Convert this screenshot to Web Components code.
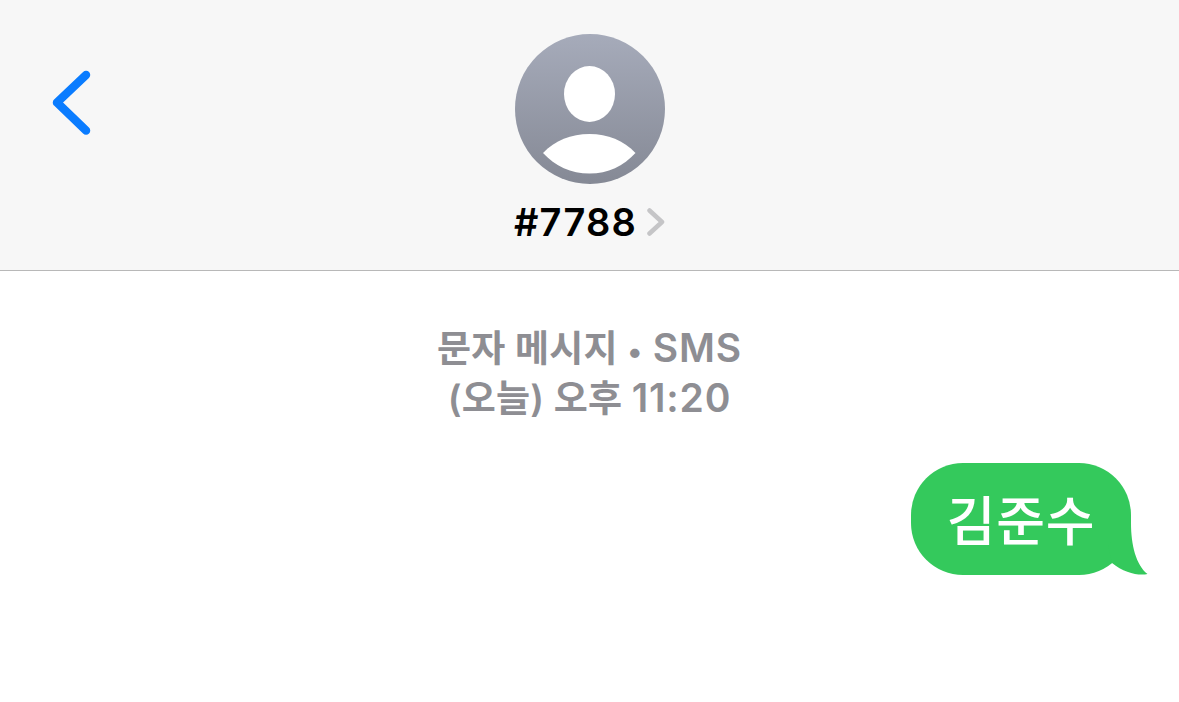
<!DOCTYPE html>
<html lang="ko">
<head>
<meta charset="utf-8">
<title>Messages</title>
<style>
  html, body { margin: 0; padding: 0; background: #fff; }
  body { width: 1179px; height: 702px; overflow: hidden; font-family: Inter, "Noto Sans CJK KR", sans-serif; }
</style>
</head>
<body>
<chat-header name="#7788"></chat-header>
<chat-thread>
  <chat-stamp>문자 메시지 <chat-latin size="30">•</chat-latin> <chat-latin>SMS</chat-latin><br>(오늘) 오후 <chat-latin>11:20</chat-latin></chat-stamp>
  <chat-bubble>김준수</chat-bubble>
</chat-thread>

<script>
(() => {
// Top bar: back arrow, contact avatar and contact name
class ChatHeader extends HTMLElement {
  constructor() {
    super();
    this.attachShadow({ mode: "open" });
    this.shadowRoot.innerHTML = `
      <style>
        :host {
          display: flex;
          flex-direction: column;
          align-items: center;
          position: relative;
          box-sizing: border-box;
          height: 271px;
          padding-top: 34px;
          background: #f7f7f7;
          border-bottom: 1px solid #b8b8b8;
        }
        .back { position: absolute; left: 48px; top: 66px; }
        .avatar { display: block; }
        .name {
          display: flex;
          align-items: center;
          gap: 10px;
          height: 40px;
          margin-top: 18px;
          font: 560 38px/40px Inter, "Noto Sans CJK KR", sans-serif;
          letter-spacing: 1.2px;
          color: #000;
        }
        .name svg { display: block; }
      </style>
      <svg class="back" width="46" height="72" viewBox="0 0 46 72" fill="none">
        <path d="M38 9 L9 36.500 L38 64.500" stroke="#0a7cff" stroke-width="8.500" stroke-linecap="round" stroke-linejoin="round"/>
      </svg>
      <svg class="avatar" width="150" height="150" viewBox="0 0 150 150">
        <defs>
          <linearGradient id="g" x1="0" y1="0" x2="0" y2="1">
            <stop offset="0" stop-color="#a6abba"/>
            <stop offset="1" stop-color="#858995"/>
          </linearGradient>
        </defs>
        <circle cx="75" cy="75" r="75" fill="url(#g)"/>
        <ellipse cx="74.500" cy="60" rx="25.500" ry="28" fill="#fff"/>
        <path d="M28 119 C40 106.500 56 100 74.500 100 C93 100 108.500 106.500 120.500 119 C108.500 132 93 139.500 74.500 139.500 C56 139.500 40 132 28 119 Z" fill="#fff"/>
      </svg>
      <div class="name"><span>${this.getAttribute("name")}</span>
        <svg width="18" height="28" viewBox="0 0 18 28" fill="none">
          <path d="M2.500 2.500 L15 14 L2.500 25.500" stroke="#c5c5c7" stroke-width="4.500" stroke-linecap="round" stroke-linejoin="round"/>
        </svg>
      </div>`;
  }
}

// Message list below the header
class ChatThread extends HTMLElement {
  constructor() {
    super();
    this.attachShadow({ mode: "open" });
    this.shadowRoot.innerHTML = `
      <style>
        :host {
          display: flex;
          flex-direction: column;
          padding: 53px 48px 0 0;
        }
      </style>
      <slot></slot>`;
  }
}

// Centered grey service / time label
class ChatStamp extends HTMLElement {
  constructor() {
    super();
    this.attachShadow({ mode: "open" });
    this.shadowRoot.innerHTML = `
      <style>
        :host {
          display: block;
          width: 1179px;
          height: 100px;
          text-align: center;
          font: 600 37px/50px Inter, "Noto Sans CJK KR", sans-serif;
          letter-spacing: 0.2px;
          color: #8e8e93;
        }
      </style>
      <slot></slot>`;
  }
}

// Latin run inside the stamp, set larger than the Hangul around it
class ChatLatin extends HTMLElement {
  constructor() {
    super();
    this.attachShadow({ mode: "open" });
    const size = this.getAttribute("size") || "39";
    this.shadowRoot.innerHTML = `
      <style>
        :host {
          display: inline;
          font-size: ${size}px;
          line-height: 1;
          letter-spacing: 0.8px;
        }
      </style>
      <slot></slot>`;
  }
}

// Outgoing SMS bubble with its tail
class ChatBubble extends HTMLElement {
  constructor() {
    super();
    this.attachShadow({ mode: "open" });
    this.shadowRoot.innerHTML = `
      <style>
        :host {
          display: block;
          position: relative;
          align-self: flex-end;
          box-sizing: border-box;
          width: 220px;
          height: 112px;
          margin-top: 39px;
          border-radius: 52px;
          background: #34c95c;
          color: #fff;
          text-align: center;
          font: 500 53px/110px "Noto Sans CJK KR", sans-serif;
          letter-spacing: 0.8px;
        }
        .tail { position: absolute; right: -17px; bottom: 0; }
      </style>
      <slot></slot>
      <svg class="tail" width="50" height="60" viewBox="0 0 50 60">
        <path d="M33 8 C33 30 38 50 49.500 59 C41 61 26 58 14 48 L10 30 Z" fill="#34c95c"/>
      </svg>`;
  }
}

customElements.define("chat-header", ChatHeader);
customElements.define("chat-thread", ChatThread);
customElements.define("chat-stamp", ChatStamp);
customElements.define("chat-latin", ChatLatin);
customElements.define("chat-bubble", ChatBubble);
})();
</script>
</body>
</html>
